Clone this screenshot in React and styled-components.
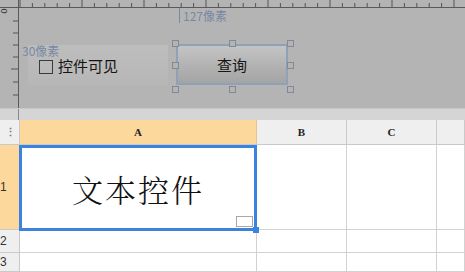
import React from "react";
import styled, { createGlobalStyle } from "styled-components";

const Global = createGlobalStyle`
  html, body { margin: 0; padding: 0; background: #fff; }
  body { font-family: "Noto Sans CJK SC", "Liberation Sans", sans-serif; }
  #root { width: 465px; height: 272px; overflow: hidden; }
`;

const Page = styled.div`
  width: 465px;
  height: 272px;
  overflow: hidden;
  display: flex;
  flex-direction: column;
`;

const Designer = styled.div`
  height: 108px;
  flex: none;
  background: #b4b4b4;
  display: grid;
  grid-template-columns: 19px 1fr;
  grid-template-rows: 8px 1fr;
`;

const Corner = styled.div`
  border-right: 1px solid #5a5a5a;
  border-bottom: 1px solid #5a5a5a;
  box-sizing: border-box;
  position: relative;
`;

const ZeroMark = styled.span`
  position: absolute;
  left: 1px;
  top: 6px;
  font: 9px "Liberation Sans", sans-serif;
  color: #333;
  transform: rotate(90deg);
`;

const TopRuler = styled.div`
  border-bottom: 1px solid #5a5a5a;
  box-sizing: border-box;
  overflow: hidden;
`;

const LeftRuler = styled.div`
  border-right: 1px solid #5a5a5a;
  box-sizing: border-box;
  overflow: hidden;
`;

const Canvas = styled.div`
  position: relative;
`;

const SizeLabel = styled.span`
  position: absolute;
  left: ${(p) => p.$x}px;
  top: ${(p) => p.$y}px;
  font-size: 12px;
  line-height: 15px;
  white-space: nowrap;
  color: #7889a3;
  padding-left: ${(p) => (p.$bar ? 3 : 0)}px;
  border-left: ${(p) => (p.$bar ? "1px solid #7889a3" : "none")};
`;

const CheckPanel = styled.div`
  position: absolute;
  left: 9px;
  top: 37px;
  width: 140px;
  height: 41px;
  background: linear-gradient(to bottom, #bdbdbd, #b9b9b9 70%, #b6b6b6);
  display: flex;
  align-items: center;
  padding-left: 11px;
  box-sizing: border-box;
  gap: 5px;
`;

const CheckBox = styled.span`
  width: 14px;
  height: 14px;
  border: 1px solid #3a3a3a;
  box-sizing: border-box;
  margin-top: 2px;
`;

const CheckText = styled.span`
  font-size: 15px;
  color: #151515;
  line-height: 18px;
`;

const QueryButton = styled.div`
  position: absolute;
  left: 157px;
  top: 36px;
  width: 112px;
  height: 41px;
  box-sizing: border-box;
  border: 2px solid #8ea1b6;
  background: linear-gradient(to bottom, #c4c4c4, #b0b0b0 60%, #a4a4a4);
  display: flex;
  align-items: center;
  justify-content: center;
  font-size: 15px;
  color: #151515;
`;

const Handle = styled.span`
  position: absolute;
  left: ${(p) => p.$x}px;
  top: ${(p) => p.$y}px;
  width: 5px;
  height: 5px;
  border: 1px solid #7f8a96;
  background: #b4b4b4;
`;

const Strip = styled.div`
  height: 12px;
  flex: none;
  background: #d5d5d5;
  border-top: 1px solid #c8c8c8;
  box-sizing: border-box;
  display: grid;
  grid-template-columns: 19px 1fr;
`;

const StripCell = styled.div`
  border-right: 1px solid #8a8a8a;
`;

const Sheet = styled.div`
  flex: 1;
  display: grid;
  grid-template-columns: 20px 237px 90px 90px 1fr;
  grid-template-rows: 25px 85px 23px 1fr;
  background: #fff;
  position: relative;
`;

const ColHead = styled.div`
  background: ${(p) => (p.$active ? "#fdd89c" : "#efefef")};
  border-right: 1px solid ${(p) => (p.$active ? "#e6c48e" : "#c9c9c9")};
  border-bottom: 1px solid #c9c9c9;
  box-sizing: border-box;
  display: flex;
  align-items: center;
  justify-content: center;
  font: bold 11px "Liberation Serif", serif;
  color: #222;
`;

const CornerHead = styled(ColHead)`
  color: #777;
  font: bold 11px "Liberation Sans", sans-serif;
  letter-spacing: -1px;
`;

const RowHead = styled.div`
  background: ${(p) => (p.$active ? "#fdd89c" : "#efefef")};
  border-right: 1px solid #c9c9c9;
  border-bottom: 1px solid #c9c9c9;
  box-sizing: border-box;
  display: flex;
  align-items: center;
  font: 12px "Liberation Sans", sans-serif;
  color: #333;
`;

const RowNum = styled.span`
  margin-left: 0;
`;

const Cell = styled.div`
  border-right: 1px solid #d2d2d2;
  border-bottom: 1px solid #d2d2d2;
  box-sizing: border-box;
`;

const SelectedCell = styled.div`
  border: 3px solid #3b83df;
  margin: 0 0 -1px -1px;
  box-sizing: border-box;
  display: flex;
  align-items: center;
  justify-content: center;
  position: relative;
  font-family: "Noto Serif CJK SC", "AR PL UMing CN", "Noto Sans CJK SC", serif;
  font-size: 31px;
  font-weight: 300;
  color: #111;
  letter-spacing: 2px;
`;

const SizeGrip = styled.span`
  position: absolute;
  right: 1px;
  bottom: 1px;
  width: 15px;
  height: 9px;
  border: 1px solid #a8a8a8;
  background: #fff;
`;

const FillHandle = styled.span`
  position: absolute;
  right: -5px;
  bottom: -5px;
  width: 6px;
  height: 6px;
  background: #3b83df;
`;

function HRuler() {
  const ticks = [];
  for (let i = 0; i < 40; i++) {
    const x = 1 + i * 12.4;
    const major = i % 5 === 0;
    ticks.push(
      <line key={i} x1={x} x2={x} y1={major ? 0 : 3} y2={8} stroke="#555" strokeWidth="1" />
    );
  }
  return (
    <svg width="446" height="8" style={{ display: "block" }}>
      {ticks}
    </svg>
  );
}

function VRuler() {
  const ys = [13, 25, 37, 49, 61, 74, 87];
  return (
    <svg width="19" height="100" style={{ display: "block" }}>
      {ys.map((y, i) => (
        <line key={y} x1={i === 4 ? 11 : 13} x2={18} y1={y} y2={y} stroke="#555" strokeWidth="1" />
      ))}
    </svg>
  );
}

export default function App() {
  const hx = [153, 210, 268];
  const hy = [32, 54, 78];
  return (
    <>
      <Global />
      <Page>
        <Designer>
          <Corner>
            <ZeroMark>0</ZeroMark>
          </Corner>
          <TopRuler>
            <HRuler />
          </TopRuler>
          <LeftRuler>
            <VRuler />
          </LeftRuler>
          <Canvas>
            <SizeLabel $x={160} $y={0} $bar>127像素</SizeLabel>
            <CheckPanel>
              <CheckBox />
              <CheckText>控件可见</CheckText>
            </CheckPanel>
            <SizeLabel $x={3} $y={35}>30像素</SizeLabel>
            <QueryButton>查询</QueryButton>
            {hy.map((y) =>
              hx.map((x) =>
                x === 210 && y === 54 ? null : <Handle key={`${x}-${y}`} $x={x} $y={y} />
              )
            )}
          </Canvas>
        </Designer>
        <Strip>
          <StripCell />
          <div />
        </Strip>
        <Sheet>
          <CornerHead>⋮</CornerHead>
          <ColHead $active>A</ColHead>
          <ColHead>B</ColHead>
          <ColHead>C</ColHead>
          <ColHead />

          <RowHead $active>
            <RowNum>1</RowNum>
          </RowHead>
          <SelectedCell>
            文本控件
            <SizeGrip />
            <FillHandle />
          </SelectedCell>
          <Cell />
          <Cell />
          <Cell />

          <RowHead>
            <RowNum>2</RowNum>
          </RowHead>
          <Cell />
          <Cell />
          <Cell />
          <Cell />

          <RowHead>
            <RowNum>3</RowNum>
          </RowHead>
          <Cell />
          <Cell />
          <Cell />
          <Cell />
        </Sheet>
      </Page>
    </>
  );
}
